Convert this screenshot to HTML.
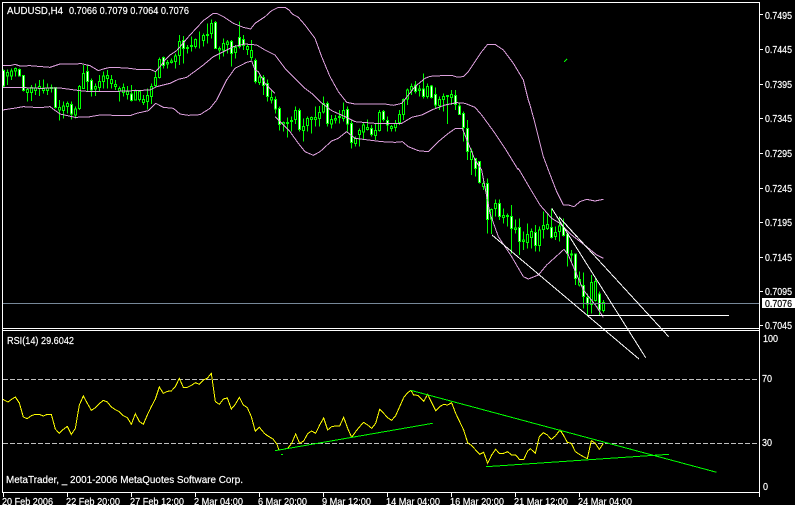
<!DOCTYPE html>
<html><head><meta charset="utf-8"><style>
html,body{margin:0;padding:0;background:#000;width:795px;height:505px;overflow:hidden}
svg{display:block}
text{font-family:"Liberation Sans",sans-serif;font-size:10.5px;fill:#fff;stroke:#fff;stroke-width:.2}
.w{fill:#fff;stroke:#00ff00;stroke-width:1;vector-effect:non-scaling-stroke}
.b{fill:#000;stroke:#00ff00;stroke-width:1;vector-effect:non-scaling-stroke}
.k{fill:none;stroke:#00ff00;stroke-width:1;vector-effect:non-scaling-stroke}
.p{fill:none;stroke:#dda0dd;stroke-width:3}
.y{fill:none;stroke:#ffff00;stroke-width:3}
</style></head><body>
<svg width="795" height="505" viewBox="0 0 795 505" shape-rendering="crispEdges">
<rect width="795" height="505" fill="#000"/>

<path d="M3 379.5H759M3 443.5H759" stroke="#c0c0c0" stroke-dasharray="5 2" fill="none"/>

<g transform="translate(-1,0) scale(1,.33333)">
<path class="k" d="M4.5 208V262M8.5 208V255M12.5 205V240M16.5 202V230M20.5 205V230M24.5 225V275M28.5 262V305M32.5 255V303M36.5 250V285M40.5 240V288M44.5 238V280M48.5 250V285M52.5 253V278M56.5 262V325M60.5 300V362M64.5 305V355M68.5 305V340M72.5 305V358M76.5 320V355M80.5 255V330M84.5 195V265M88.5 195V275M92.5 235V290M96.5 250V288M100.5 225V275M104.5 215V265M108.5 210V265M112.5 225V265M116.5 240V270M120.5 260V305M124.5 250V290M128.5 258V298M132.5 255V305M136.5 268V300M140.5 270V305M144.5 285V315M148.5 265V328M152.5 250V312M156.5 215V262M160.5 172V235M164.5 170V205M168.5 180V205M172.5 175V190M176.5 160V205M180.5 105V195M184.5 108V190M188.5 135V160M192.5 110V155M196.5 115V145M200.5 95V145M204.5 100V140M208.5 70V130M212.5 58V115M216.5 63V147M220.5 140V178M224.5 115V170M228.5 120V160M232.5 120V200M236.5 135V175M240.5 65V145M244.5 105V150M248.5 130V165M252.5 120V180M256.5 175V250M260.5 225V255M264.5 225V285M268.5 238V305M272.5 270V310M276.5 290V340M280.5 320V392M284.5 365V395M288.5 352V412M292.5 350V395M296.5 320V372M300.5 325V395M304.5 355V425M308.5 350V395M312.5 350V400M316.5 320V380M320.5 318V380M324.5 290V340M328.5 305V380M332.5 345V385M336.5 345V370M340.5 330V370M344.5 308V365M348.5 320V395M352.5 360V445M356.5 410V440M360.5 385V440M364.5 368V420M368.5 358V392M372.5 375V410M376.5 370V420M380.5 330V395M384.5 330V365M388.5 350V395M392.5 375V395M396.5 360V395M400.5 330V375M404.5 295V360M408.5 265V315M412.5 250V285M416.5 243V280M420.5 255V290M424.5 220V295M428.5 250V295M432.5 255V295M436.5 262V325M440.5 290V330M444.5 280V335M448.5 285V372M452.5 270V315M456.5 270V330M460.5 310V345M464.5 335V425M468.5 360V480"/>
<path class="w" d="M3.5 212h2V258h-2zM19.5 208h2V228h-2zM23.5 226h2V272h-2zM55.5 263h2V322h-2zM71.5 313h2V342h-2zM87.5 214h2V245h-2zM91.5 241h2V270h-2zM131.5 282h2V302h-2zM163.5 172h2V196h-2zM183.5 122h2V146h-2zM215.5 67h2V145h-2zM231.5 125h2V160h-2zM239.5 112h2V140h-2zM243.5 118h2V137h-2zM255.5 182h2V245h-2zM263.5 232h2V257h-2zM267.5 250h2V290h-2zM275.5 298h2V327h-2zM279.5 326h2V374h-2zM299.5 332h2V389h-2zM327.5 310h2V370h-2zM347.5 328h2V372h-2zM351.5 370h2V428h-2zM371.5 385h2V403h-2zM383.5 334h2V358h-2zM387.5 362h2V375h-2zM415.5 255h2V274h-2zM423.5 267h2V290h-2zM431.5 258h2V292h-2zM435.5 283h2V315h-2zM455.5 287h2V313h-2zM459.5 318h2V344h-2zM463.5 340h2V383h-2zM467.5 385h2V455h-2z"/>
<path class="b" d="M7.5 217h2V228h-2zM11.5 213h2V228h-2zM15.5 205h2V213h-2zM27.5 268h2V278h-2zM31.5 263h2V278h-2zM35.5 264h2V272h-2zM39.5 259h2V266h-2zM43.5 264h2V272h-2zM47.5 264h2V272h-2zM51.5 262h2V265h-2zM59.5 322h2V330h-2zM63.5 318h2V332h-2zM67.5 310h2V320h-2zM75.5 327h2V345h-2zM79.5 259h2V325h-2zM83.5 220h2V266h-2zM95.5 259h2V267h-2zM99.5 244h2V262h-2zM103.5 228h2V245h-2zM107.5 226h2V236h-2zM111.5 238h2V251h-2zM115.5 253h2V260h-2zM119.5 265h2V273h-2zM123.5 262h2V278h-2zM127.5 275h2V284h-2zM135.5 273h2V300h-2zM139.5 274h2V298h-2zM143.5 298h2V307h-2zM147.5 286h2V304h-2zM151.5 260h2V290h-2zM155.5 232h2V256h-2zM159.5 178h2V232h-2zM167.5 188h2V192h-2zM171.5 183h2V188h-2zM175.5 168h2V185h-2zM179.5 124h2V166h-2zM187.5 143h2V146h-2zM191.5 136h2V140h-2zM195.5 118h2V139h-2zM203.5 106h2V122h-2zM207.5 103h2V107h-2zM211.5 70h2V100h-2zM219.5 145h2V150h-2zM223.5 130h2V150h-2zM227.5 126h2V133h-2zM235.5 143h2V158h-2zM247.5 140h2V148h-2zM251.5 152h2V172h-2zM259.5 231h2V248h-2zM271.5 292h2V300h-2zM283.5 368h2V372h-2zM287.5 367h2V370h-2zM291.5 361h2V365h-2zM295.5 332h2V358h-2zM303.5 380h2V392h-2zM307.5 356h2V376h-2zM311.5 352h2V358h-2zM315.5 352h2V358h-2zM319.5 338h2V355h-2zM323.5 310h2V336h-2zM331.5 358h2V372h-2zM335.5 355h2V360h-2zM339.5 350h2V353h-2zM343.5 332h2V355h-2zM355.5 416h2V430h-2zM359.5 392h2V403h-2zM363.5 375h2V396h-2zM367.5 382h2V388h-2zM375.5 391h2V407h-2zM379.5 337h2V392h-2zM391.5 380h2V385h-2zM395.5 370h2V382h-2zM399.5 343h2V368h-2zM403.5 298h2V344h-2zM407.5 270h2V297h-2zM411.5 259h2V270h-2zM419.5 267h2V271h-2zM427.5 260h2V290h-2zM439.5 298h2V317h-2zM443.5 290h2V298h-2zM447.5 287h2V290h-2zM451.5 283h2V293h-2z"/>
</g>

<g transform="translate(-1,130) scale(1,.33333)">
<path class="k" d="M472.5 55V135M476.5 85V140M480.5 95V160M484.5 150V180M488.5 145V310M492.5 235V312M496.5 208V260M500.5 208V270M504.5 235V280M508.5 250V290M512.5 225V370M516.5 268V310M520.5 265V375M524.5 305V360M528.5 280V355M532.5 295V355M536.5 285V365M540.5 290V365M544.5 245V325M548.5 250V300M552.5 235V325M556.5 290V330M560.5 260V335M564.5 265V320M568.5 312V410M572.5 360V395M576.5 372V465M580.5 425V470M584.5 428V535M588.5 490V555M592.5 435V550M596.5 445V515M600.5 485V555M604.5 510V548"/>
<path class="w" d="M475.5 85h2V115h-2zM479.5 95h2V158h-2zM487.5 160h2V268h-2zM499.5 220h2V260h-2zM511.5 260h2V296h-2zM519.5 292h2V334h-2zM535.5 307h2V347h-2zM551.5 293h2V323h-2zM563.5 293h2V317h-2zM567.5 312h2V370h-2zM575.5 372h2V445h-2zM583.5 466h2V500h-2zM587.5 503h2V522h-2zM599.5 492h2V540h-2z"/>
<path class="b" d="M471.5 65h2V88h-2zM483.5 160h2V170h-2zM491.5 238h2V267h-2zM495.5 220h2V236h-2zM503.5 256h2V262h-2zM507.5 256h2V260h-2zM515.5 294h2V298h-2zM523.5 330h2V335h-2zM527.5 313h2V338h-2zM531.5 304h2V323h-2zM539.5 300h2V347h-2zM543.5 286h2V298h-2zM547.5 284h2V296h-2zM555.5 307h2V320h-2zM559.5 288h2V305h-2zM571.5 372h2V375h-2zM579.5 448h2V465h-2zM591.5 458h2V524h-2zM595.5 455h2V512h-2zM603.5 518h2V542h-2z"/>
</g>

<g transform="scale(.33333)">
<path class="p" d="M8 197H30L45 193L60 198L90 197L150 202L165 197L180 192H210L245 191L270 197L295 212L310 207L330 202L380 204L410 208H450L467 215L480 200L495 180L510 165L530 152L570 105L610 62L640 40H650L670 50L700 70L730 82L752 87L765 70L795 50"/>
<path class="p" d="M8 262H50L120 265L180 264L210 268L240 272L270 275H330L400 272L450 270L470 260L510 250L535 238L560 232L590 210L610 195L640 170L700 140L735 132L770 135L795 150"/>
<path class="p" d="M8 330L40 325L70 320L120 323L150 320L180 342L225 352L265 351L300 345L390 347L410 340L445 332L467 310L490 322L520 325L540 342L565 346L600 344L630 325L650 300L680 240L705 205L740 187L755 183L765 210L775 215L795 250L825 280"/>
</g>
<g transform="translate(265,0) scale(.33333)">
<path class="p" d="M0 50L20 32L40 22H60L72 30L82 42L100 52L120 75L135 95L150 115L170 170L195 230L220 275L245 307L270 312H360L385 316L410 310L420 298L450 260L480 235L495 229L530 227L560 226L575 231L595 230L610 215L650 155L668 133H690L715 150L745 190L775 240L790 300L795 315"/>
<path class="p" d="M0 150L30 165L60 205L100 245L120 265L140 280L165 305L200 332L240 350L270 365L330 370H410L440 352L470 345L500 330L540 315L575 308L600 310L630 322L650 345L690 400L720 445L760 510"/>
<path class="p" d="M30 350L40 360L75 395L100 430L120 455L145 466L165 455L200 423L220 415L245 395L270 415L310 420L350 425L390 427L412 425L430 440L460 452L490 455L520 425L550 400L572 385H592L610 430L630 480L650 510"/>
</g>
<g transform="translate(530,0) scale(.33333)">
<path class="p" d="M0 315L15 370L30 430L40 470L55 510"/>
</g>
<g transform="translate(440,130) scale(.33333)">
<path class="p" d="M325 120L350 185L370 225H385L402 230L420 215L440 208L465 213L490 208"/>
<path class="p" d="M235 115L270 175L300 225L335 265L360 280L395 315L440 350L470 375L490 385"/>
<path class="p" d="M125 120L150 250L175 320L215 380L250 440L265 447L295 435L320 405L372 358L385 375L430 480L470 530L490 562"/>
</g>

<path d="M564 62L567 59" stroke="#00ff00" fill="none"/>

<path d="M3 303.5H759" stroke="#778899" fill="none"/>
<path d="M587 315.5H729" stroke="#fff" fill="none"/>
<path d="M492 235L639 359M551.7 208.3L645.7 357.7M559.3 217.3L668.7 336.7M559.3 217.3L577 237" stroke="#fff" fill="none"/>

<g transform="translate(0,325) scale(.33333)">
<path class="y" d="M8 222L12 225L24 231L36 222L46 216L58 234L70 276L82 281L94 272L106 268H118L130 273L142 268H154L166 312L178 325L190 313L202 304L214 328L226 310L238 240L250 213L262 235L274 256L286 248L298 236L310 226L322 231L334 246L346 254L358 260L370 272L382 278L394 298L406 266L418 289L430 298L442 270L454 245L466 222L478 186L490 205L502 199L514 198L526 185L538 160L550 187H562L574 181L586 173L598 178L610 165L622 160L634 145L646 230L658 238L670 222L682 219L694 252L706 238L718 217L730 240L742 248L754 275L766 319L778 307L795 327"/>
</g>
<g transform="translate(265,325) scale(.33333)">
<path class="y" d="M0 327L12 335L24 342L36 358L42 375L54 373L68 370L80 355L92 327L104 355L116 348L128 326L140 318L152 325L164 300L176 279L188 315L200 305L212 303H224L236 277L248 310L260 337L272 320L284 305L296 292L308 300L320 310L332 295L344 253L356 265L368 278L380 286L392 272L404 245L416 218L428 203L438 196L446 210L458 211L476 229L488 208L500 233L512 257L524 245L536 238L548 240L560 233L572 265L584 290L596 315L608 353L620 362L632 375L644 388L656 382L668 415L680 390L692 373L704 386L716 385L728 380L740 390H752L764 404H776L788 378L795 372"/>
</g>
<g transform="translate(530,280) scale(.33333)">
<path class="y" d="M0 505L16 520L28 470L40 458L52 465L64 478L76 468L90 450L100 465L112 487L124 490L136 515L148 523L160 530L172 536L184 482L196 490L208 508L220 490"/>
</g>
<path d="M275 450.7L432.7 423.3M410.7 390.3L716.7 472.3M486 466.7L669 454.3M281 454.5H283" stroke="#00ff00" fill="none"/>

<path d="M2 2.5H759.5M2.5 2V492.5M2 328.5H760M2 330.5H760M2 492.5H760M759.5 2V497" stroke="#fff" fill="none"/>
<path d="M760 14.5H763M760 49.5H763M760 84.5H763M760 118.5H763M760 153.5H763M760 188.5H763M760 222.5H763M760 257.5H763M760 291.5H763M760 325.5H763M3.5 492V497M67.5 492V497M131.5 492V497M195.5 492V497M259.5 492V497M323.5 492V497M387.5 492V497M451.5 492V497M515.5 492V497M579.5 492V497" stroke="#fff" fill="none"/>
<rect x="762" y="298" width="33" height="10" fill="#fff"/>
</svg>
<svg width="795" height="505" viewBox="0 0 795 505" style="position:absolute;left:0;top:0">
<text x="7" y="14" textLength="56" lengthAdjust="spacingAndGlyphs">AUDUSD,H4</text>
<text x="69" y="14" textLength="120" lengthAdjust="spacingAndGlyphs">0.7066 0.7079 0.7064 0.7076</text>
<text x="765" y="19" textLength="27" lengthAdjust="spacingAndGlyphs">0.7495</text>
<text x="765" y="53" textLength="27" lengthAdjust="spacingAndGlyphs">0.7445</text>
<text x="765" y="88" textLength="27" lengthAdjust="spacingAndGlyphs">0.7395</text>
<text x="765" y="122" textLength="27" lengthAdjust="spacingAndGlyphs">0.7345</text>
<text x="765" y="157" textLength="27" lengthAdjust="spacingAndGlyphs">0.7295</text>
<text x="765" y="192" textLength="27" lengthAdjust="spacingAndGlyphs">0.7245</text>
<text x="765" y="226" textLength="27" lengthAdjust="spacingAndGlyphs">0.7195</text>
<text x="765" y="261" textLength="27" lengthAdjust="spacingAndGlyphs">0.7145</text>
<text x="765" y="295" textLength="27" lengthAdjust="spacingAndGlyphs">0.7095</text>
<text x="765" y="307" textLength="27" lengthAdjust="spacingAndGlyphs" style="fill:#000;stroke:#000">0.7076</text>
<text x="765" y="329" textLength="27" lengthAdjust="spacingAndGlyphs">0.7045</text>
<text x="763" y="342" textLength="15" lengthAdjust="spacingAndGlyphs">100</text>
<text x="762" y="382" textLength="10" lengthAdjust="spacingAndGlyphs">70</text>
<text x="762" y="446" textLength="10" lengthAdjust="spacingAndGlyphs">30</text>
<text x="763" y="490" textLength="5" lengthAdjust="spacingAndGlyphs">0</text>
<text x="7" y="344" textLength="67" lengthAdjust="spacingAndGlyphs">RSI(14) 29.6042</text>
<text x="6" y="483" textLength="237" lengthAdjust="spacingAndGlyphs">MetaTrader, _ 2001-2006 MetaQuotes Software Corp.</text>
<text x="2" y="505" textLength="51" lengthAdjust="spacingAndGlyphs">20 Feb 2006</text>
<text x="66" y="505" textLength="54" lengthAdjust="spacingAndGlyphs">22 Feb 20:00</text>
<text x="130" y="505" textLength="54" lengthAdjust="spacingAndGlyphs">27 Feb 12:00</text>
<text x="194" y="505" textLength="49" lengthAdjust="spacingAndGlyphs">2 Mar 04:00</text>
<text x="258" y="505" textLength="49" lengthAdjust="spacingAndGlyphs">6 Mar 20:00</text>
<text x="322" y="505" textLength="49" lengthAdjust="spacingAndGlyphs">9 Mar 12:00</text>
<text x="386" y="505" textLength="54" lengthAdjust="spacingAndGlyphs">14 Mar 04:00</text>
<text x="450" y="505" textLength="54" lengthAdjust="spacingAndGlyphs">16 Mar 20:00</text>
<text x="514" y="505" textLength="54" lengthAdjust="spacingAndGlyphs">21 Mar 12:00</text>
<text x="578" y="505" textLength="54" lengthAdjust="spacingAndGlyphs">24 Mar 04:00</text>
</svg>
</body></html>
